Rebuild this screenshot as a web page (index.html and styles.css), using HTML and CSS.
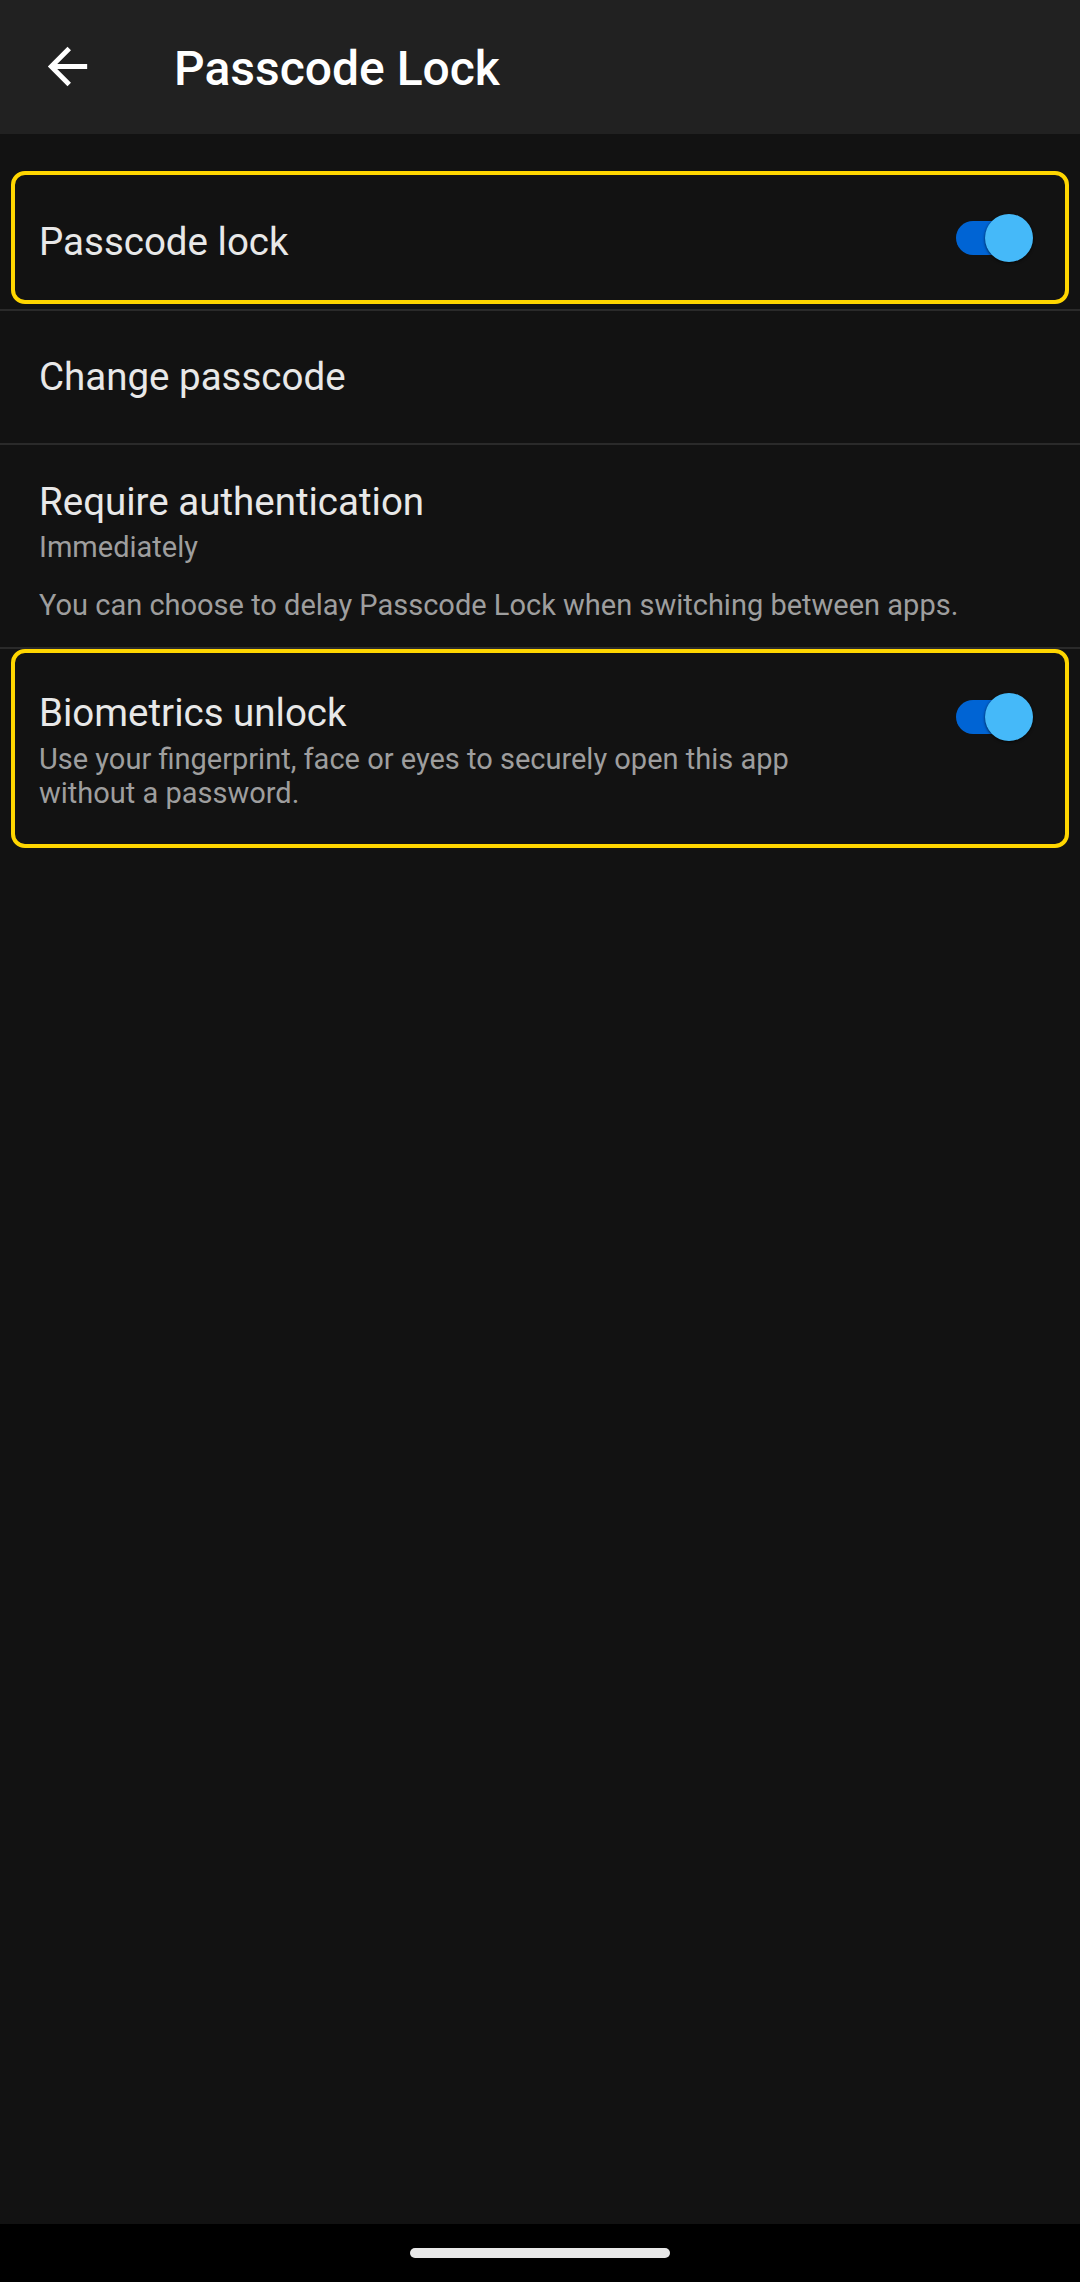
FILE: index.html
```html
<!DOCTYPE html>
<html lang="en">
<head>
    <meta charset="UTF-8">
    <meta name="viewport" content="width=device-width, initial-scale=1.0">
    <title>Passcode Lock</title>
    <link rel="stylesheet" href="styles.css">
</head>
<body>
    <div class="appbar">
        <svg class="back" viewBox="0 0 24 24"><path d="M20 11H7.83l5.59-5.59L12 4l-8 8 8 8 1.41-1.41L7.83 13H20v-2z" fill="#fff"/></svg>
        <span class="appbar-title">Passcode Lock</span>
    </div>

    <div class="list">
        <div class="row highlight first">
            <div class="row-text">
                <div class="row-title">Passcode lock</div>
            </div>
            <span class="switch on"><span class="track"></span><span class="thumb"></span></span>
        </div>
        <div class="divider"></div>

        <div class="row plain">
            <div class="row-text">
                <div class="row-title">Change passcode</div>
            </div>
        </div>
        <div class="divider"></div>

        <div class="row plain tall">
            <div class="row-text">
                <div class="row-title">Require authentication</div>
                <div class="row-sub">Immediately</div>
                <div class="row-note">You can choose to delay Passcode Lock when switching between apps.</div>
            </div>
        </div>
        <div class="divider"></div>

        <div class="row highlight bio">
            <div class="row-text narrow">
                <div class="row-title">Biometrics unlock</div>
                <div class="row-desc">Use your fingerprint, face or eyes to securely open this app without a password.</div>
            </div>
            <span class="switch on top"><span class="track"></span><span class="thumb"></span></span>
        </div>
    </div>

    <span style="flex: 1;"></span>
    <div class="navbar">
        <span class="handle"></span>
    </div>
</body>
</html>
```

FILE: styles.css
```css
:root {
    --bg: #121212;
    --bar: #212121;
    --line: #2a2a2a;
    --text: #e8e8e8;
    --muted: #9e9e9e;
    --yellow: #ffd600;
    --track: #0064d4;
    --thumb: #45b9f9;
}

html {
    background-color: var(--bg);
    font-family: Roboto, "Noto Sans", sans-serif;
}

body {
    margin: 0;
    padding: 0;
    width: 1080px;
    height: 2282px;
    display: flex;
    flex-direction: column;
    overflow: hidden;
}

.appbar {
    height: 134px;
    background-color: var(--bar);
    display: flex;
    align-items: center;
    flex-shrink: 0;
}

.back {
    width: 59px;
    height: 59px;
    margin-left: 38px;
    margin-top: -1px;
}

.appbar-title {
    margin-left: 77px;
    color: #fff;
    font-size: 48px;
    font-weight: 500;
    margin-top: 2px;
}

.list {
    padding-top: 37px;
    display: flex;
    flex-direction: column;
}

.row {
    display: flex;
    align-items: center;
    padding: 0 39px;
}

.row.highlight {
    margin: 0 11px 0 11px;
    padding: 0 32px 0 24px;
    border: 4px solid var(--yellow);
    border-radius: 14px;
}

.row.first { height: 125px; margin-bottom: 5px; }
.row.first .row-title { margin-top: 9px; }
.row.plain { height: 132px; }
.row.tall { height: auto; padding-top: 34px; padding-bottom: 24px; align-items: flex-start; }
.row.bio { align-items: flex-start; padding-top: 37px; padding-bottom: 34px; }

.row-text { flex: 1; }
.row-text.narrow { flex: 0 1 770px; }

.row-title {
    color: var(--text);
    font-size: 38.5px;
    line-height: 46px;
}

.row-sub {
    color: var(--muted);
    font-size: 29px;
    line-height: 36px;
    margin-top: 4px;
}

.row-note {
    color: var(--muted);
    font-size: 29px;
    line-height: 36px;
    margin-top: 22px;
}

.row-desc {
    color: var(--muted);
    font-size: 29px;
    line-height: 34px;
    margin-top: 6px;
}

.divider {
    height: 2px;
    background-color: var(--line);
}

.switch {
    position: relative;
    width: 77px;
    height: 48px;
    flex-shrink: 0;
    margin-left: auto;
}

.switch.top { margin-top: 3px; }

.switch .track {
    position: absolute;
    left: 0;
    top: 7px;
    width: 70px;
    height: 34px;
    border-radius: 17px;
    background-color: var(--track);
}

.switch .thumb {
    position: absolute;
    right: 0;
    top: 0;
    width: 48px;
    height: 48px;
    border-radius: 50%;
    background-color: var(--thumb);
    box-shadow: 0 1px 3px rgba(0, 0, 0, 0.7);
}

.navbar {
    height: 58px;
    background-color: #000;
    display: flex;
    justify-content: center;
    flex-shrink: 0;
}

.handle {
    width: 260px;
    height: 10px;
    margin-top: 24px;
    border-radius: 5px;
    background-color: #e8e8e8;
}
```
